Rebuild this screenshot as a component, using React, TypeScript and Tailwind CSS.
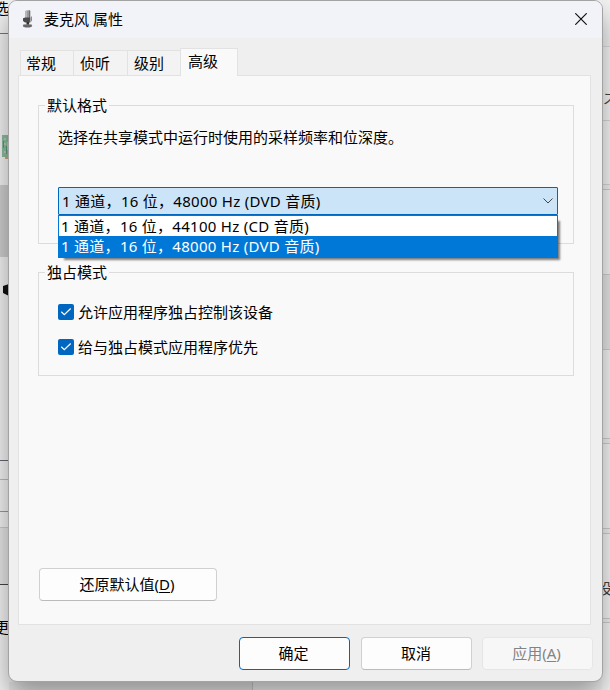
import React, { useState } from 'react';
import clsx from 'clsx';

const TABS = [
  { label: '常规', width: 'w-[53px]' },
  { label: '侦听', width: 'w-[54px]' },
  { label: '级别', width: 'w-[53px]' },
  { label: '高级', width: 'w-[58px]' },
];

const FORMATS = [
  '1 通道，16 位，44100 Hz (CD 音质)',
  '1 通道，16 位，48000 Hz (DVD 音质)',
];

const MicIcon = () => (
  <svg className="h-[18px] w-[12px]" viewBox="0 0 12 18" fill="none">
    <path d="M3 1L7.5 0V10.5L3 11.5Z" fill="#9a9a9a" />
    <path d="M3 1L5 0.6V8H3Z" fill="#b8b8b8" />
    <path d="M7 0.2L8.3 0.8V10.5H7Z" fill="#6f6f6f" />
    <path d="M1 8.3L3 7.6H8.3V11.5L6.5 12.5H3L1 11Z" fill="#4a4a4a" />
    <path d="M9.5 6.5V11L7 13" stroke="#8c8c8c" />
    <path d="M4.5 12H7V15H4.5Z" fill="#333" />
    <ellipse cx="5.5" cy="15.7" rx="4.7" ry="1.8" fill="#666" />
    <path d="M1.2 15Q3 14.2 4.5 14.3M7 14.3Q8.5 14.4 9.6 15" stroke="#a5a5a5" />
  </svg>
);

// Slices of the settings windows that stick out on the left side
const LeftBackdrop = () => (
  <div className="h-[690px] w-[9px] overflow-hidden bg-[#f3f3f3] text-black">
    <div className="box-content h-[33px] border-b border-[#777]">
      <div className="-ml-[6px] w-[15px] leading-[16px]">选</div>
    </div>
    <div className="h-[101px]" />
    <div className="h-[24px] pl-[2px]">
      <svg className="block h-[24px] w-[7px]" viewBox="0 0 7 24">
        <path d="M0 0H7V22H0Z" fill="#8bbd9f" />
        <path d="M2 3H4V5H2ZM5 7H7V15H5ZM2 8H4V10H2ZM2 16H4V18H2Z" fill="#b9c9c0" />
        <path d="M1 6H2V13H1ZM4 11H5V19H4Z" fill="#5d9b78" />
        <path d="M3 22H7V24H3Z" fill="#d9a566" />
      </svg>
    </div>
    <div className="h-[26px]" />
    <div className="h-[72px] bg-[#cfcfcf]" />
    <div className="h-[27px]" />
    <div className="h-[12px] pl-[3px]">
      <svg className="block h-[12px] w-[6px]" viewBox="0 0 6 12">
        <path d="M0 2L6 0V12L0 9Z" fill="#111" />
      </svg>
    </div>
    <div className="h-[164px]" />
    <div className="h-[19px] border-t border-[#667]" />
    <div className="h-[32px] border-t border-[#bbb]" />
    <div className="h-[16px] border-t border-[#999]" />
    <div className="h-[58px] border-y border-t-[#ccc] border-b-[#444] bg-[#e6e6e6]" />
    <div className="h-[105px] pt-[32px]">
      <div className="-ml-[6px] w-[15px] leading-[20px]">更</div>
    </div>
  </div>
);

const RightBackdrop = () => (
  <div className="h-[690px] w-[8px] overflow-hidden bg-[#f3f3f3] text-[#444]">
    <div className="h-[46px]" />
    <div className="h-[74px] border-t border-[#ddd] bg-[#f7f7f7] pt-[41px]">
      <div className="ml-[1px] w-[15px] text-[14px] leading-[20px]">ズ</div>
    </div>
    <div className="h-[65px] border-y border-[#d8d8d8] bg-[#f7f7f7]" />
    <div className="h-[4px]" />
    <div className="h-[86px] border-y border-[#d0d0d0] bg-[#f7f7f7]" />
    <div className="h-[74px] bg-[#e9e9e9]" />
    <div className="h-[90px] border-y border-[#d0d0d0] bg-[#f7f7f7]" />
    <div className="h-[4px]" />
    <div className="h-[86px] border-y border-[#d0d0d0] bg-[#f7f7f7]" />
    <div className="h-[4px]" />
    <div className="h-[86px] border-y border-[#d0d0d0] bg-[#f7f7f7] pt-[44px]">
      <div className="-ml-[5px] w-[15px] leading-[20px]">设</div>
    </div>
    <div className="h-[3px]" />
    <div className="h-[68px] border-t border-[#d0d0d0] bg-[#f7f7f7]" />
  </div>
);

const Group: React.FC<{ title: string; className: string; children: React.ReactNode }> = ({
  title,
  className,
  children,
}) => (
  <div className={clsx('w-[536px] border border-[#dcdcdc]', className)}>
    <div className="-mt-[11px] ml-[6px] h-5 w-[64px] bg-[#f9f9f9] pl-[2px] leading-5">{title}</div>
    {children}
  </div>
);

const CheckRow: React.FC<{ label: string; checked: boolean; onToggle: () => void }> = ({
  label,
  checked,
  onToggle,
}) => (
  <button type="button" onClick={onToggle} className="flex h-5 items-center gap-1 leading-5">
    <span
      className={clsx(
        'flex h-4 w-4 items-center justify-center rounded-[2px]',
        checked ? 'bg-[#0067c0]' : 'border border-[#888] bg-white'
      )}
    >
      {checked && (
        <svg className="h-4 w-4" viewBox="0 0 16 16" fill="none">
          <path d="M3.3 7.8L6.3 10.7L12.7 4.5" stroke="white" strokeWidth="1.2" />
        </svg>
      )}
    </span>
    <span>{label}</span>
  </button>
);

export default function App() {
  const [tab, setTab] = useState(3);
  const [format, setFormat] = useState(1);
  const [allowExclusive, setAllowExclusive] = useState(true);
  const [priority, setPriority] = useState(true);

  return (
    <div className="relative flex h-[690px] w-[610px] justify-between overflow-hidden bg-[#f3f3f3] font-['Noto_Sans','Noto_Sans_CJK_SC',sans-serif] text-[15px] text-black">
      <LeftBackdrop />
      <div className="mt-[682px] w-[244px] border-r border-[#ccc] bg-[#e9e9e9]" />
      <div className="mt-[682px] flex-1 bg-[#f3f3f3]" />
      <RightBackdrop />

      <div className="absolute top-0 left-[8px] flex h-[682px] w-[595px] flex-col overflow-hidden rounded-[9px] border border-[#a3a3a3] bg-[#efefef] shadow-[0_14px_28px_rgba(0,0,0,0.38)]">
        <div className="flex h-[37px] shrink-0 items-center bg-[#f1f3f9] pr-[15px] pb-[2px] pl-[13px]">
          <MicIcon />
          <div className="ml-[10px] flex-1 leading-5">麦克风 属性</div>
          <svg className="h-[12px] w-[12px]" viewBox="0 0 12 12">
            <path d="M0.3 0.3L11.7 11.7M11.7 0.3L0.3 11.7" stroke="#111" strokeWidth="1.2" />
          </svg>
        </div>

        <div className="mt-[10px] ml-[11px] flex h-[28px] shrink-0 items-end">
          {TABS.map(({ label, width }, i) => (
            <button
              key={label}
              type="button"
              onClick={() => setTab(i)}
              className={clsx(
                'border-t border-l border-[#e2e2e2] text-left leading-5',
                width,
                i === tab
                  ? 'z-10 h-[28px] border-r bg-[#f9f9f9] pb-[3px] pl-[7px]'
                  : 'mb-[1px] h-[25px] bg-[#f3f3f3]',
                i !== tab && (i === 0 ? 'pl-[5px]' : 'pl-[6px]')
              )}
            >
              {label}
            </button>
          ))}
        </div>

        <div className="-mt-px ml-[9px] flex h-[550px] w-[573px] shrink-0 flex-col border border-[#e2e2e2] bg-[#f9f9f9] pl-[19px]">
          <Group title="默认格式" className="mt-[29px] h-[139px]">
            <div className="mt-[12px] ml-[19px] leading-5">
              选择在共享模式中运行时使用的采样频率和位深度。
            </div>
            <div className="relative mt-[40px] ml-[19px] w-[500px] tracking-[0.28px]">
              <div className="flex h-[28px] items-center justify-between rounded-[1px] border border-[#0067c0] bg-[#cce4f7] pr-[4px] pl-[3px]">
                <span className="leading-5">{FORMATS[format]}</span>
                <svg className="h-[6px] w-[10px]" viewBox="0 0 10 6" fill="none">
                  <path d="M0.5 0.5L5 5L9.5 0.5" stroke="#444" />
                </svg>
              </div>
              <div className="absolute top-[28px] left-0 z-20 h-[43px] w-[500px] border border-[#0078d7] bg-white shadow-[4px_4px_2px_-2px_rgba(0,0,0,0.5)]">
                {FORMATS.map((f, i) => (
                  <div
                    key={f}
                    onClick={() => setFormat(i)}
                    className={clsx(
                      'h-[20px] pl-[2px] leading-[20px]',
                      i === format && 'bg-[#0078d7] text-white',
                      i === FORMATS.length - 1 && 'h-[21px]'
                    )}
                  >
                    {f}
                  </div>
                ))}
              </div>
            </div>
          </Group>

          <Group title="独占模式" className="mt-[28px] h-[104px]">
            <div className="mt-[20px] ml-[19px] flex flex-col gap-[15px]">
              <CheckRow
                label="允许应用程序独占控制该设备"
                checked={allowExclusive}
                onToggle={() => setAllowExclusive(!allowExclusive)}
              />
              <CheckRow
                label="给与独占模式应用程序优先"
                checked={priority}
                onToggle={() => setPriority(!priority)}
              />
            </div>
          </Group>

          <button
            type="button"
            className="mt-[192px] ml-[1px] h-[33px] w-[178px] rounded-[4px] border border-[#d0d0d0] border-b-[#bbb] bg-[#fdfdfd] pr-[2px]"
          >
            还原默认值(<u className="underline-offset-2">D</u>)
          </button>
        </div>

        <div className="mt-[12px] flex justify-end pr-[9px]">
          <button type="button" className="mr-[11px] h-[33px] w-[111px] rounded-[4px] border border-[#0067c0] bg-[#fdfdfd] pr-[2px]">
            确定
          </button>
          <button type="button" className="mr-[10px] h-[33px] w-[111px] rounded-[4px] border border-[#d0d0d0] border-b-[#bbb] bg-[#fdfdfd] pr-[1px]">
            取消
          </button>
          <button type="button" disabled className="h-[33px] w-[111px] rounded-[4px] border border-[#e6e6e6] bg-[#f7f7f7] pr-[2px] text-[#838383]">
            应用(<u className="underline-offset-2">A</u>)
          </button>
        </div>
      </div>
    </div>
  );
}
